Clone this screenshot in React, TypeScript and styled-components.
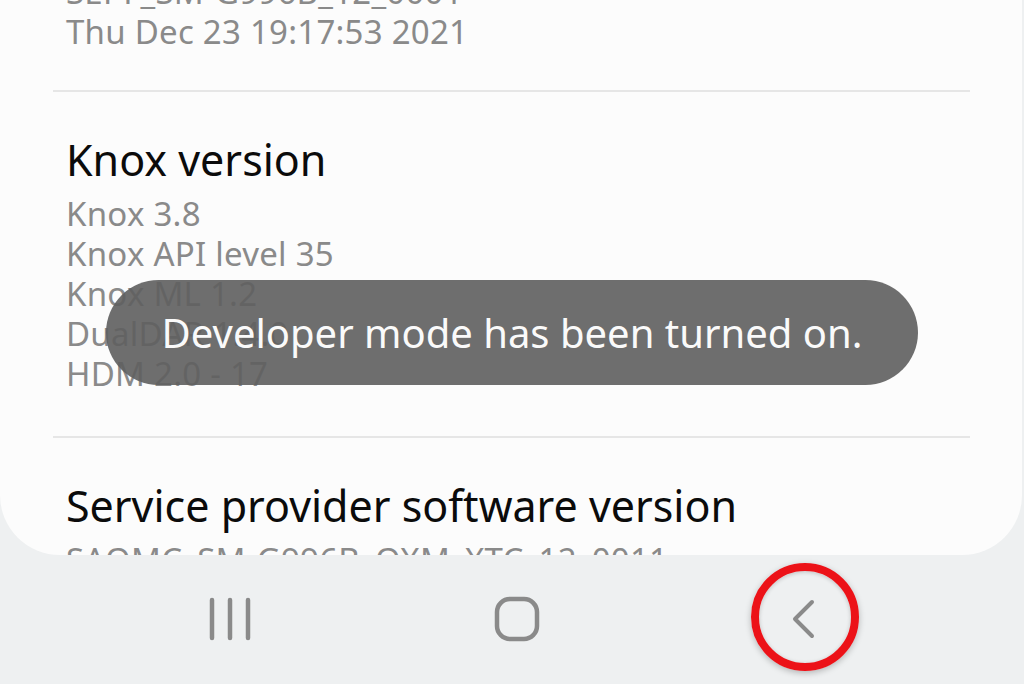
import React from "react";
import styled, { createGlobalStyle } from "styled-components";

const Global = createGlobalStyle`
  html, body { margin: 0; padding: 0; }
  body {
    width: 1024px;
    height: 684px;
    overflow: hidden;
    background: #eef0f1;
    font-family: "Noto Sans", "Open Sans", sans-serif;
  }
`;

const Screen = styled.div`
  width: 1024px;
  height: 684px;
  display: flex;
  flex-direction: column;
  position: relative;
`;

const Card = styled.div`
  width: 1022px;
  height: 555px;
  flex: none;
  background: #fcfcfc;
  border-radius: 0 0 60px 60px;
  overflow: hidden;
  position: relative;
`;

const List = styled.div`
  display: flex;
  flex-direction: column;
  margin-top: -170px;
`;

const Item = styled.div<{ $padBottom: number }>`
  padding: 42px 40px ${(p) => p.$padBottom}px 66px;
  display: flex;
  flex-direction: column;
`;

const Title = styled.div`
  font-size: 43px;
  line-height: 52px;
  color: #0b0b0b;
  margin-bottom: 8px;
  white-space: nowrap;
`;

const Sub = styled.div`
  font-size: 33px;
  line-height: 40px;
  letter-spacing: 0.25px;
  color: #8a8a8a;
  white-space: nowrap;
`;

const Divider = styled.div`
  height: 2px;
  margin: 0 52px 0 53px;
  background: #e6e6e6;
`;

const Toast = styled.div`
  position: absolute;
  left: 106px;
  top: 280px;
  width: 812px;
  height: 105px;
  border-radius: 53px;
  background: rgba(96, 96, 96, 0.91);
  color: #fafafa;
  font-size: 40px;
  display: flex;
  align-items: center;
  justify-content: center;
  white-space: nowrap;
`;

const NavBar = styled.div`
  flex: 1;
  display: grid;
  grid-template-columns: repeat(3, 287px);
  justify-content: center;
  align-items: center;
  padding-left: 10px;
  padding-bottom: 2px;
`;

const NavButton = styled.div`
  position: relative;
  height: 100px;
  display: flex;
  align-items: center;
  justify-content: center;
`;

const Highlight = styled.div`
  position: absolute;
  left: 50%;
  top: 50%;
  width: 92px;
  height: 92px;
  transform: translate(-50%, -50%) translate(1px, -2px);
  border: 8px solid #ec1218;
  border-radius: 50%;
  box-shadow: 0 2px 6px rgba(0, 0, 0, 0.25), inset 0 1px 4px rgba(0, 0, 0, 0.2);
`;

const sections = [
  {
    title: "SE for Android status",
    lines: ["Enforced", "SEPF_SM-G996B_12_0001", "Thu Dec 23 19:17:53 2021"],
    padBottom: 38,
  },
  {
    title: "Knox version",
    lines: ["Knox 3.8", "Knox API level 35", "Knox ML 1.2", "DualDAR 1.4.0", "HDM 2.0 - 17"],
    padBottom: 42,
  },
  {
    title: "Service provider software version",
    lines: ["SAOMC_SM-G996B_OXM_XTC_12_0011", "XTC/XTC/XTC/XTC"],
    padBottom: 42,
  },
];

export default function App() {
  return (
    <Screen>
      <Global />
      <Card>
        <List>
          {sections.map((s, i) => (
            <React.Fragment key={s.title}>
              {i > 0 && <Divider />}
              <Item $padBottom={s.padBottom}>
                <Title>{s.title}</Title>
                {s.lines.map((l) => (
                  <Sub key={l}>{l}</Sub>
                ))}
              </Item>
            </React.Fragment>
          ))}
        </List>
        <Toast>Developer mode has been turned on.</Toast>
      </Card>
      <NavBar>
        <NavButton>
          <svg width="44" height="44" viewBox="0 0 44 44">
            <g stroke="#8a8a8a" strokeWidth="4.5" strokeLinecap="round">
              <line x1="4" y1="3" x2="4" y2="41" />
              <line x1="22" y1="3" x2="22" y2="41" />
              <line x1="40" y1="3" x2="40" y2="41" />
            </g>
          </svg>
        </NavButton>
        <NavButton>
          <svg width="46" height="46" viewBox="0 0 46 46">
            <rect x="3" y="3" width="40" height="40" rx="13" fill="none" stroke="#8a8a8a" strokeWidth="4.5" />
          </svg>
        </NavButton>
        <NavButton>
          <svg width="26" height="40" viewBox="0 0 26 40">
            <polyline points="21,3 4,20 21,37" fill="none" stroke="#8a8a8a" strokeWidth="4" strokeLinecap="round" strokeLinejoin="round" />
          </svg>
          <Highlight />
        </NavButton>
      </NavBar>
    </Screen>
  );
}
